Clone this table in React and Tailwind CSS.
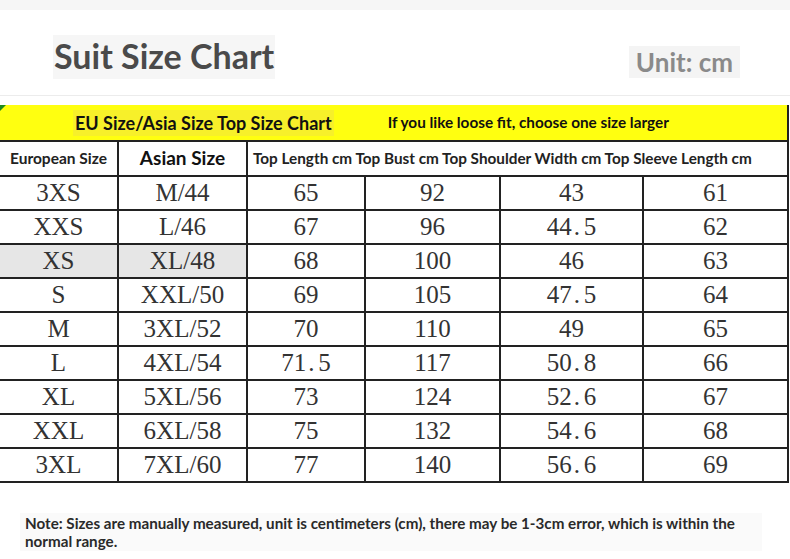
import React from 'react';

const rows = [
  ['3XS', 'M/44', '65', '92', '43', '61'],
  ['XXS', 'L/46', '67', '96', '44.5', '62'],
  ['XS', 'XL/48', '68', '100', '46', '63'],
  ['S', 'XXL/50', '69', '105', '47.5', '64'],
  ['M', '3XL/52', '70', '110', '49', '65'],
  ['L', '4XL/54', '71.5', '117', '50.8', '66'],
  ['XL', '5XL/56', '73', '124', '52.6', '67'],
  ['XXL', '6XL/58', '75', '132', '54.6', '68'],
  ['3XL', '7XL/60', '77', '140', '56.6', '69'],
];

const widths = ['w-[118px]', 'w-[129px]', 'w-[118px]', 'w-[135px]', 'w-[143px]', 'w-[145px]'];

// the chart's font gives the decimal point a full half-width cell
const Cell = ({ value }) => {
  const [a, b] = value.split('.');
  if (b === undefined) return value;
  return (
    <>
      {a}
      <span className="inline-block w-[12px] text-left pl-[2px]">.</span>
      {b}
    </>
  );
};

const App = () => {
  return (
    <div className="w-[790px] h-[559px] bg-white font-['Lato',sans-serif] overflow-hidden">
      <div className="h-[10px] bg-[#f6f6f6]" />

      {/* Title */}
      <div className="flex items-center justify-between h-[86px] pl-[53px] pr-[50px] border-b border-[#ececec]">
        <h1 className="bg-[#f6f6f6] px-[1px] pb-[2px] mt-[8px] text-[34px] leading-[42px] font-bold text-[#4a4a4a]">
          Suit Size Chart
        </h1>
        <div className="bg-[#f4f4f4] px-[7px] mt-[18px] text-[26px] leading-[32px] font-bold text-[#8a8a8a]">
          Unit: cm
        </div>
      </div>

      <div className="h-[9px]" />

      {/* Table */}
      <div className="relative w-[789px]">
        <div className="absolute left-0 top-0 w-0 h-0 border-t-[6px] border-r-[6px] border-t-[#1f8a1f] border-r-transparent" />
        <div className="flex items-center h-[35px] bg-[#ffff10] border-r-2 border-[#222]">
          <span className="ml-[73px] px-[2px] bg-[#f7f02a] text-[18px] font-bold text-[#111] leading-[26px]">
            EU Size/Asia Size Top Size Chart
          </span>
          <span className="ml-[54px] text-[15.3px] font-bold text-[#111]">
            If you like loose fit, choose one size larger
          </span>
        </div>

        <table className="border-collapse table-fixed w-[789px]">
          <colgroup>
            {widths.map((w, i) => (
              <col key={i} className={w} />
            ))}
          </colgroup>
          <tbody>
            <tr className="h-[35px]">
              <td className="border-2 border-[#222] border-l-0 text-center text-[15.5px] font-bold text-[#222] whitespace-nowrap">
                European Size
              </td>
              <td className="border-2 border-[#222] text-center text-[19px] font-bold text-[#111]">
                Asian Size
              </td>
              <td colSpan={4} className="border-2 border-[#222] pl-[5px] text-[15.3px] font-bold text-[#222] whitespace-nowrap">
                Top Length cm Top Bust cm Top Shoulder Width cm Top Sleeve Length cm
              </td>
            </tr>
            {rows.map((r, i) => (
              <tr key={i} className="h-[34px]">
                {r.map((c, j) => (
                  <td
                    key={j}
                    className={`border-2 border-[#222] text-center font-['Liberation_Serif',serif] text-[25px] leading-[30px] text-[#333] ${
                      j === 0 ? 'border-l-0' : ''
                    } ${i === 2 && j < 2 ? 'bg-[#e6e6e6]' : ''}`}
                  >
                    <Cell value={c} />
                  </td>
                ))}
              </tr>
            ))}
          </tbody>
        </table>
      </div>

      {/* Note */}
      <div className="mt-[30px] ml-[20px] w-[742px] bg-[#fafafa] px-[5px] py-[1px] text-[15.2px] leading-[18px] font-bold text-[#2a2a2a]">
        Note: Sizes are manually measured, unit is centimeters (cm), there may be 1-3cm error, which is within the normal range.
      </div>
    </div>
  );
};

export default App;
